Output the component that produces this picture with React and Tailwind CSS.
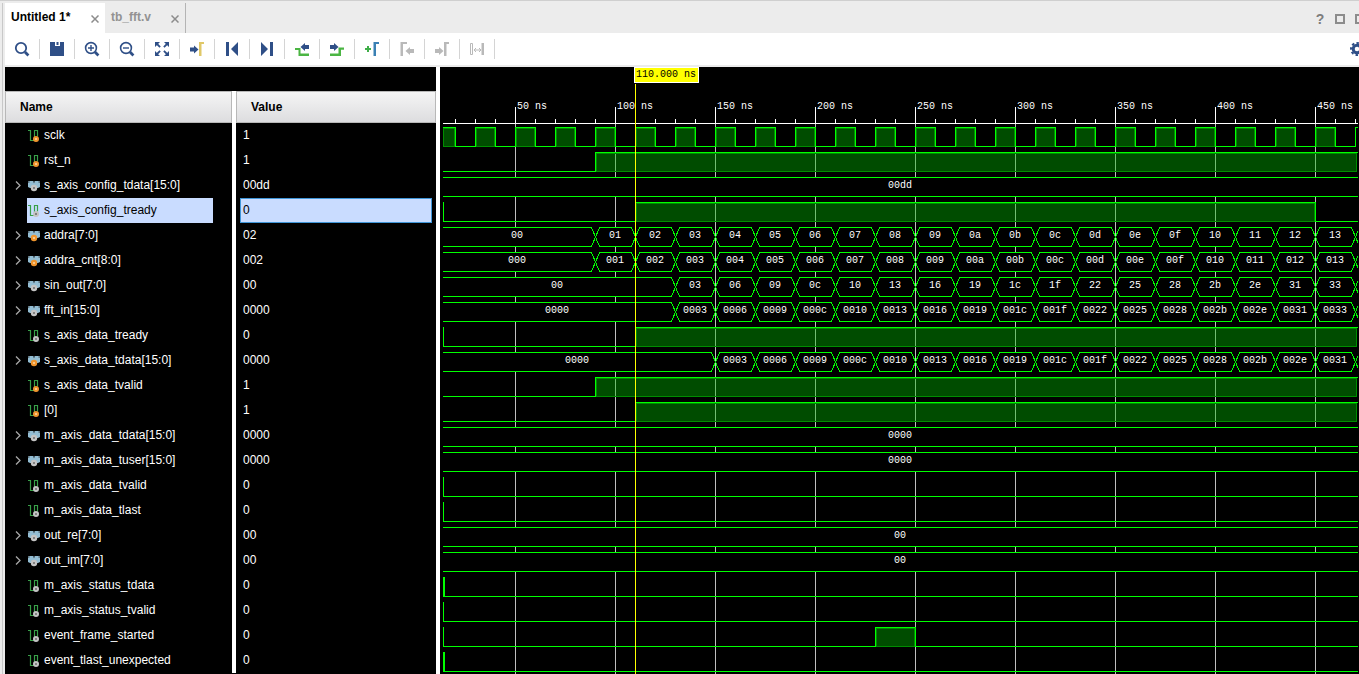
import React from 'react';

const NAVY = '#2f4f87';
const GREEN = '#4bb543';
const GREY = '#b9b9b9';

const ROW = 25;
const RULER = 56;
const HI = 4;
const LO = 23;
const T0 = 14;
const T1 = 471;

// 2px per ns, 50 ns sits at x = 75
const px = (t) => 2 * t - 25;

const hexRun = (first, count, width) =>
    Array.from({ length: count }, (_, i) => (first + i).toString(16).padStart(width, '0'));

const sine = ['03', '06', '09', '0c', '10', '13', '16', '19', '1c', '1f', '22', '25', '28', '2b', '2e', '31', '33'];

const signals = [
    { name: 'sclk', value: '1', ball: 'orange', clock: true },
    { name: 'rst_n', value: '1', ball: 'orange', high: [[90, T1]] },
    { name: 's_axis_config_tdata[15:0]', value: '00dd', bus: { idle: '00dd' } },
    { name: 's_axis_config_tready', value: '0', selected: true, edge: 1, high: [[110, 450]] },
    { name: 'addra[7:0]', value: '02', ball: 'orange', bus: { idle: '00', start: 90, values: hexRun(1, 19, 2) } },
    { name: 'addra_cnt[8:0]', value: '002', ball: 'orange', bus: { idle: '000', start: 90, values: hexRun(1, 19, 3) } },
    { name: 'sin_out[7:0]', value: '00', bus: { idle: '00', start: 130, values: sine } },
    { name: 'fft_in[15:0]', value: '0000', bus: { idle: '0000', start: 130, values: sine.map((v) => '00' + v) } },
    { name: 's_axis_data_tready', value: '0', edge: 1, high: [[110, T1]] },
    { name: 's_axis_data_tdata[15:0]', value: '0000', ball: 'orange', bus: { idle: '0000', start: 150, values: sine.slice(0, 16).map((v) => '00' + v) } },
    { name: 's_axis_data_tvalid', value: '1', ball: 'orange', high: [[90, T1]] },
    { name: '[0]', value: '1', ball: 'orange', high: [[110, T1]] },
    { name: 'm_axis_data_tdata[15:0]', value: '0000', bus: { idle: '0000' } },
    { name: 'm_axis_data_tuser[15:0]', value: '0000', bus: { idle: '0000' } },
    { name: 'm_axis_data_tvalid', value: '0', edge: 1 },
    { name: 'm_axis_data_tlast', value: '0', edge: 1 },
    { name: 'out_re[7:0]', value: '00', bus: { idle: '00' } },
    { name: 'out_im[7:0]', value: '00', bus: { idle: '00' } },
    { name: 'm_axis_status_tdata', value: '0', edge: 2 },
    { name: 'm_axis_status_tvalid', value: '0', edge: 1 },
    { name: 'event_frame_started', value: '0', edge: 1, high: [[230, 250]] },
    { name: 'event_tlast_unexpected', value: '0', edge: 2 },
];

const clockHigh = Array.from({ length: 24 }, (_, i) => [Math.max(10 + 20 * i, T0), Math.min(20 + 20 * i, T1)]);

const tools = [
    {
        label: 'Search',
        icon: (
            <g stroke={NAVY} fill="none">
                <circle cx="7" cy="7" r="5.2" strokeWidth="1.8" />
                <path d="M11 11l3.4 3.4" strokeWidth="2.8" />
            </g>
        ),
    },
    { label: 'Save', icon: <path fill={NAVY} d="M1 1h5v4h5V1h4v14H1zM7.500 1h2v3h-2z" /> },
    {
        label: 'Zoom in',
        icon: (
            <g stroke={NAVY} fill="none">
                <circle cx="7" cy="7" r="5.4" strokeWidth="1.6" />
                <path d="M4 7h6M7 4v6" strokeWidth="1.4" />
                <path d="M11 11l3.4 3.4" strokeWidth="2.8" />
            </g>
        ),
    },
    {
        label: 'Zoom out',
        icon: (
            <g stroke={NAVY} fill="none">
                <circle cx="7" cy="7" r="5.4" strokeWidth="1.6" />
                <path d="M4 7h6" strokeWidth="1.4" />
                <path d="M11 11l3.4 3.4" strokeWidth="2.8" />
            </g>
        ),
    },
    {
        label: 'Zoom fit',
        icon: (
            <g>
                <path fill={NAVY} d="M1 1h5L1 6zM15 1v5l-5-5zM1 15v-5l5 5zM15 15h-5l5-5z" />
                <path stroke={NAVY} strokeWidth="1.8" d="M2.5 2.500l3.6 3.6M13.5 2.500L9.900 6.100M2.500 13.500l3.600-3.600M13.500 13.500L9.900 9.900" />
            </g>
        ),
    },
    {
        label: 'Go to cursor',
        icon: (
            <g>
                <path fill={NAVY} d="M1 6.500h4v-2l4.500 4-4.500 4v-2H1z" />
                <path fill="#e0c868" d="M10 1h5v2h-2.500v12H10z" />
            </g>
        ),
    },
    { label: 'Go to start', icon: <path fill={NAVY} d="M2 1h3v14H2zM14 1v14L7 8z" /> },
    { label: 'Go to end', icon: <path fill={NAVY} d="M11 1h3v14h-3zM2 1v14l7-7z" /> },
    {
        label: 'Previous transition',
        icon: (
            <g>
                <path fill={GREEN} d="M1 7h5.500v5.500H15V15H4.500V9H1z" />
                <path fill={NAVY} d="M15 4h-4V2L6.500 6l4.500 4V8h4z" />
            </g>
        ),
    },
    {
        label: 'Next transition',
        icon: (
            <g>
                <path fill={GREEN} d="M15 6.500H9.500v6H1V15h11V8.800h3z" />
                <path fill={NAVY} d="M1 4h4V2l4.500 4L5 10V8H1z" />
            </g>
        ),
    },
    {
        label: 'Add marker',
        icon: (
            <g>
                <path fill="#3fae49" d="M3 5h2v2h2v2H5v2H3V9H1V7h2z" />
                <path fill="#3a80b4" d="M9.500 1H15v2h-3v12H9.500z" />
            </g>
        ),
    },
    {
        label: 'Previous marker',
        disabled: true,
        icon: <path fill={GREY} d="M1.500 1H8v2H4v12H1.500zM15 8h-4V6l-4.500 4 4.500 4v-2h4z" />,
    },
    {
        label: 'Next marker',
        disabled: true,
        icon: <path fill={GREY} d="M10 1h5v2h-2.500v12H10zM1 8h4V6l4.500 4L5 14v-2H1z" />,
    },
    {
        label: 'Swap cursors',
        disabled: true,
        icon: (
            <g>
                <path fill="none" stroke={GREY} d="M1.500 2.500h2v11h-2z" />
                <path fill="none" stroke={GREY} d="M5 9h7M7 7L5 9l2 2M10 7l2 2-2 2" />
                <path fill={GREY} d="M12.500 2H15v12h-2.500z" />
            </g>
        ),
    },
];

function SignalIcon({ bus, ball }) {
    const fill = ball === 'orange' ? '#f0952d' : '#c4c4c4';
    const dot = ball === 'orange' ? '#fbd9a8' : '#6b6b6b';
    return (
        <svg width="12" height="12" viewBox="0 0 12 12" className="shrink-0" aria-hidden="true">
            {bus ? (
                <>
                    <path fill="#93bdd3" d="M0 1h5l1 2 1-2h5v6l-2 1H2L0 7z" />
                    <path fill="#5f7480" d="M0 1h1.500v2H0zM10.500 1H12v2h-1.500zM5.200 1h1.600L6 3.500z" />
                    <circle cx="6" cy="8" r="3.2" fill={fill} />
                    <circle cx="6" cy="8" r="1" fill={dot} />
                </>
            ) : (
                <>
                    <path fill="none" stroke="#38a048" strokeWidth="1.2" d="M0 .5h2.500v10h4v-10h3v6" />
                    <circle cx="8" cy="9" r="3" fill={fill} />
                    <circle cx="8" cy="9" r="1" fill={dot} />
                </>
            )}
        </svg>
    );
}

function BitWave({ high = [], edge = 0 }) {
    let line = `M${px(T0)} ${LO + 0.5}`;
    high.forEach(([a, b]) => {
        line = a === T0 ? `M${px(a)} ${HI + 0.5}` : `${line}H${px(a) + 0.5}V${HI + 0.5}`;
        line += b === T1 ? `H${px(T1) + 1}` : `H${px(b) + 0.5}V${LO + 0.5}`;
    });
    const last = high[high.length - 1];
    if (!last || last[1] !== T1) line += `H${px(T1) + 1}`;

    return (
        <g shapeRendering="crispEdges">
            <path d={line} fill="none" stroke="#00ff00" />
            {high.map(([a, b]) => {
                const left = a === T0 ? px(a) : px(a) + 1;
                return (
                    <rect
                        key={a}
                        x={left + 0.5}
                        y={HI + 1.5}
                        width={Math.max(px(b) - left - 1, 0)}
                        height={LO - HI - 1}
                        fill="#00be00"
                        fillOpacity="0.4"
                        stroke="#008c00"
                    />
                );
            })}
            {edge > 0 && <rect x={px(T0)} y={HI} width={edge} height={LO - HI} fill="#00ff00" />}
        </g>
    );
}

function BusWave({ idle, start = 473, values = [] }) {
    const segments = [{ from: 12, to: start, text: idle }];
    values.forEach((text, i) => segments.push({ from: start + 20 * i, to: start + 20 * (i + 1), text }));
    const end = segments[segments.length - 1].to;
    if (end < 473) segments.push({ from: end, to: 490, text: '' });
    const mid = (HI + LO + 1) / 2;

    return (
        <g>
            {segments.map(({ from, to, text }) => {
                // segments that run past the view keep flat ends outside the clip
                const a = px(from === 12 ? 0 : from) + 0.5;
                const b = px(to === 473 ? 490 : to) + 0.5;
                return (
                    <g key={from}>
                        <path
                            shapeRendering="crispEdges"
                            fill="#000"
                            stroke="#00ff00"
                            d={`M${a} ${mid}L${a + 4} ${HI + 0.5}H${b - 4}L${b} ${mid}L${b - 4} ${LO + 0.5}H${a + 4}Z`}
                        />
                        <text x={(px(from) + px(to)) / 2} y="15" textAnchor="middle" fill="#fff">
                            {text}
                        </text>
                    </g>
                );
            })}
        </g>
    );
}

function Waveform() {
    const majors = [50, 100, 150, 200, 250, 300, 350, 400, 450];
    const minors = Array.from({ length: 46 }, (_, i) => 20 + 10 * i);
    const bottom = RULER + signals.length * ROW + 1;

    return (
        <svg
            width="100%"
            height={bottom}
            className="block font-['Liberation_Mono',monospace] text-[10px]"
            role="img"
            aria-label="Waveform"
        >
            <defs>
                <clipPath id="plot">
                    <rect x="3" y="0" width="915" height={bottom} />
                </clipPath>
            </defs>
            <g clipPath="url(#plot)">
                <g shapeRendering="crispEdges">
                    {majors.map((t) => (
                        <rect key={t} x={px(t)} y={RULER} width="1" height={bottom - RULER} fill="#bebebe" />
                    ))}
                </g>
                {signals.map((s, i) => (
                    <g key={s.name} transform={`translate(0 ${RULER + i * ROW})`}>
                        {s.bus ? <BusWave {...s.bus} /> : <BitWave high={s.clock ? clockHigh : s.high} edge={s.edge} />}
                    </g>
                ))}
                <g shapeRendering="crispEdges" fill="#fff">
                    <rect x="3" y={RULER} width="915" height="1" />
                    {minors.map((t) => (
                        <rect key={t} x={px(t)} y={RULER - 4} width="1" height="4" />
                    ))}
                    {majors.map((t) => (
                        <rect key={t} x={px(t)} y="40" width="1" height="16" />
                    ))}
                </g>
                {majors.map((t) => (
                    <text key={t} x={px(t) + 2} y="42" fill="#fff">
                        {t} ns
                    </text>
                ))}
                <rect x={px(110)} y="17" width="1" height={bottom - 17} fill="#ffff00" />
                <rect x={px(110) - 0.5} y="0.5" width="64" height="15" fill="#ffff00" stroke="#fff" />
                <text x={px(110) + 1} y="10" fill="#000">
                    110.000 ns
                </text>
            </g>
        </svg>
    );
}

function CloseButton({ label }) {
    return (
        <button type="button" aria-label={label} className="mt-0.5">
            <svg width="8" height="8" viewBox="0 0 8 8" stroke="#8c8c8c" strokeWidth="1.5">
                <path d="M.5.5l7 7M7.500.5l-7 7" />
            </svg>
        </button>
    );
}

function TabBar() {
    return (
        <div className="flex h-[30px] bg-[#ececec] text-xs font-bold">
            <div className="flex w-[100px] items-center justify-between bg-white px-1.5">
                <button type="button" className="pb-0.5 text-black">Untitled 1*</button>
                <CloseButton label="Close Untitled 1" />
            </div>
            <div className="flex w-[81px] items-center justify-between border-r border-[#b4b4b4] px-1.5">
                <button type="button" className="pb-0.5 text-[#929292]">tb_fft.v</button>
                <CloseButton label="Close tb_fft.v" />
            </div>
            <div className="ml-auto flex items-center gap-2.5 overflow-hidden pt-0.5 text-[#7d7d7d]">
                <button type="button" aria-label="Help" className="w-2.5 text-sm">?</button>
                <button type="button" aria-label="Maximize" className="size-2.5 border-2 border-[#8c8c8c]" />
                <button type="button" aria-label="Float" className="h-2.5 w-1 border-2 border-r-0 border-[#8c8c8c]" />
            </div>
        </div>
    );
}

function Toolbar() {
    return (
        <div className="flex h-8 items-center bg-white">
            {tools.map(({ label, icon, disabled }) => (
                <button
                    key={label}
                    type="button"
                    aria-label={label}
                    disabled={disabled}
                    className="flex h-5 w-[35px] shrink-0 items-center justify-center border-r border-[#d4d4d4]"
                >
                    <svg width="16" height="16" viewBox="0 0 16 16" fillRule="evenodd">{icon}</svg>
                </button>
            ))}
            <button type="button" aria-label="Settings" className="ml-auto w-[9px] overflow-hidden">
                <svg width="14" height="14" viewBox="0 0 14 14" className="max-w-none">
                    <circle cx="7" cy="7" r="3.8" fill="none" stroke={NAVY} strokeWidth="3" />
                    <circle cx="7" cy="7" r="6" fill="none" stroke={NAVY} strokeWidth="2" strokeDasharray="2.500 2.212" strokeDashoffset="1.25" />
                </svg>
            </button>
        </div>
    );
}

function SignalTable() {
    const head = 'h-8 border border-[#b8b8b8] bg-linear-to-b from-[#f5f5f5] to-[#dddddf] pl-3.5 text-left font-bold text-black';
    return (
        <div className="w-[431px] shrink-0 bg-black pt-6">
            <table className="w-full table-fixed border-separate border-spacing-0 text-xs text-white">
                <colgroup>
                    <col className="w-[227px]" />
                    <col className="w-1" />
                    <col />
                </colgroup>
                <thead>
                    <tr>
                        <th scope="col" className={head}>Name</th>
                        <td className="bg-white p-0" />
                        <th scope="col" className={head}>Value</th>
                    </tr>
                </thead>
                <tbody>
                    {signals.map((s) => (
                        <tr key={s.name}>
                            <td className="h-[25px] p-0">
                                <div className="flex h-[25px] items-center pr-[19px] pl-2">
                                    <div className="w-3.5 shrink-0">
                                        {s.bus && (
                                            <button type="button" aria-label={`Expand ${s.name}`} className="block pl-0.5">
                                                <svg width="6" height="9" viewBox="0 0 6 9" fill="none" stroke="#a8a8a8" strokeWidth="1.3">
                                                    <path d="M1 .5l4 4-4 4" />
                                                </svg>
                                            </button>
                                        )}
                                    </div>
                                    <div
                                        className={
                                            s.selected
                                                ? 'flex h-[25px] flex-1 items-center gap-1 bg-[#c9dcff] pl-px text-black'
                                                : 'flex h-[25px] flex-1 items-center gap-1 pl-px'
                                        }
                                    >
                                        <SignalIcon bus={!!s.bus} ball={s.ball} />
                                        <span className="pb-0.5">{s.name}</span>
                                    </div>
                                </div>
                            </td>
                            <td className="bg-white p-0" />
                            <td className="h-[25px] px-1 py-0">
                                <div
                                    className={
                                        s.selected
                                            ? 'flex h-[25px] items-center border border-[#4096d8] bg-[#c9dcff] pl-0.5 text-black'
                                            : 'flex h-[25px] items-center pl-[3px]'
                                    }
                                >
                                    <span className="pb-0.5">{s.value}</span>
                                </div>
                            </td>
                        </tr>
                    ))}
                </tbody>
            </table>
        </div>
    );
}

export default function App() {
    return (
        <div className="min-h-screen overflow-hidden border-t border-[#cfcfcf] bg-[#ececec] pt-0.5 pl-0.5 font-['Liberation_Sans',Arial,sans-serif]">
            <div className="border-l border-[#c8c8c8] pl-0.5">
                <TabBar />
                <Toolbar />
                <div className="mt-0.5 flex bg-black">
                    <SignalTable />
                    <div className="w-1 shrink-0 bg-white" />
                    <div className="min-w-0 flex-1 overflow-hidden bg-black">
                        <Waveform />
                    </div>
                </div>
            </div>
        </div>
    );
}
